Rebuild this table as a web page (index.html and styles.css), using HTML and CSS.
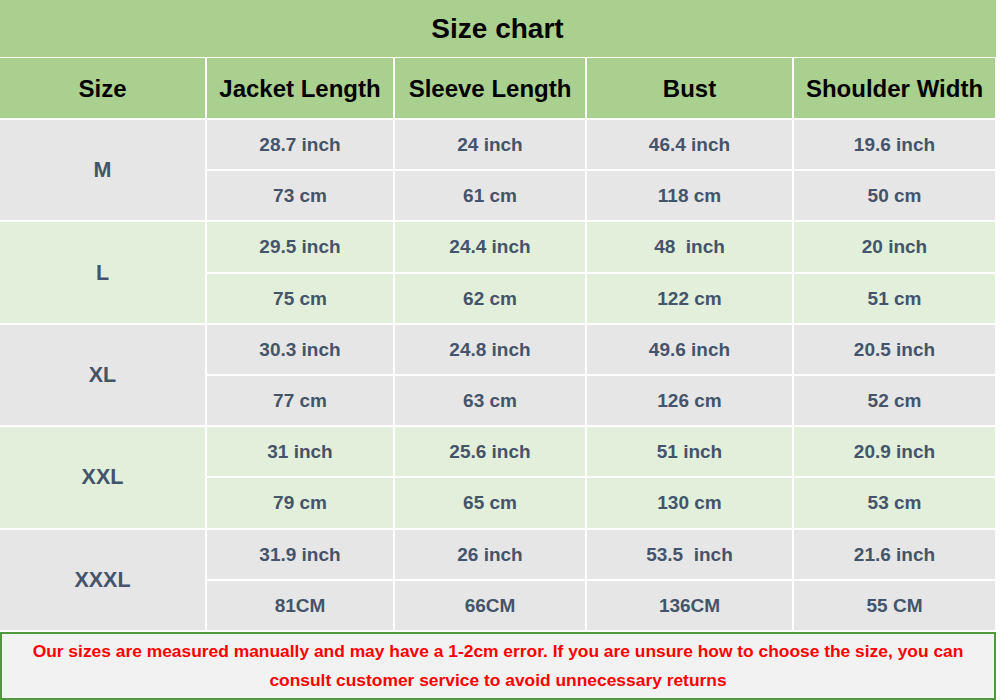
FILE: index.html
```html
<!DOCTYPE html>
<html>
<head>
<meta charset="utf-8">
<link rel="stylesheet" href="styles.css">
</head>
<body>
<div class="chart">
  <div class="title">Size chart</div>
  <table class="grid">
    <colgroup>
      <col class="c1"><col class="c2"><col class="c3"><col class="c4"><col class="c5">
    </colgroup>
    <thead>
      <tr class="head">
        <th>Size</th><th>Jacket Length</th><th>Sleeve Length</th><th>Bust</th><th>Shoulder Width</th>
      </tr>
    </thead>
    <tbody>
      <tr class="gray"><td rowspan="2" class="size">M</td><td>28.7 inch</td><td>24 inch</td><td>46.4 inch</td><td>19.6 inch</td></tr>
      <tr class="gray"><td>73 cm</td><td>61 cm</td><td>118 cm</td><td>50 cm</td></tr>
      <tr class="green"><td rowspan="2" class="size">L</td><td>29.5 inch</td><td>24.4 inch</td><td>48&nbsp; inch</td><td>20 inch</td></tr>
      <tr class="green"><td>75 cm</td><td>62 cm</td><td>122 cm</td><td>51 cm</td></tr>
      <tr class="gray"><td rowspan="2" class="size">XL</td><td>30.3 inch</td><td>24.8 inch</td><td>49.6 inch</td><td>20.5 inch</td></tr>
      <tr class="gray"><td>77 cm</td><td>63 cm</td><td>126 cm</td><td>52 cm</td></tr>
      <tr class="green"><td rowspan="2" class="size">XXL</td><td>31 inch</td><td>25.6 inch</td><td>51 inch</td><td>20.9 inch</td></tr>
      <tr class="green"><td>79 cm</td><td>65 cm</td><td>130 cm</td><td>53 cm</td></tr>
      <tr class="gray"><td rowspan="2" class="size">XXXL</td><td>31.9 inch</td><td>26 inch</td><td>53.5&nbsp; inch</td><td>21.6 inch</td></tr>
      <tr class="gray"><td>81CM</td><td>66CM</td><td>136CM</td><td>55 CM</td></tr>
    </tbody>
  </table>
  <div class="note">Our sizes are measured manually and may have a 1-2cm error. If you are unsure how to choose the size, you can consult customer service to avoid unnecessary returns</div>
</div>
</body>
</html>
```
FILE: styles.css
```css
html, body {
  margin: 0;
  padding: 0;
  background: #ffffff;
}
body {
  font-family: "Liberation Sans", Arial, sans-serif;
  font-weight: bold;
}
.chart {
  width: 996px;
}
.title {
  height: 57px;
  background: #a9d08e;
  color: #000;
  font-size: 28px;
  line-height: 58px;
  text-align: center;
  border-bottom: 1px solid #fff;
  padding-right: 1px;
}
.grid {
  width: 996px;
  border-collapse: collapse;
  table-layout: fixed;
}
.c1 { width: 206px; }
.c2 { width: 188px; }
.c3 { width: 192px; }
.c4 { width: 207px; }
.c5 { width: 203px; }
.grid th, .grid td {
  border: 2px solid #fff;
  text-align: center;
  padding: 0;
}
.grid tr:first-child th { border-top: 0; }
.grid th:first-child, .grid td.size { border-left: 0; }
.head th {
  height: 58px;
  padding-top: 2px;
  background: #a9d08e;
  color: #000;
  font-size: 24px;
}
.grid td {
  height: 48.2px;
  padding-top: 1px;
  font-size: 19px;
  color: #44546a;
}
.grid td.size {
  font-size: 21.5px;
}
.gray td { background: #e7e6e6; }
.green td { background: #e2efda; }
.note {
  box-sizing: border-box;
  height: 68px;
  border: 2px solid #4f9a3a;
  background: #f2f2f2;
  color: #ff0000;
  font-size: 17.4px;
  line-height: 29px;
  text-align: center;
  padding: 3px 10px 0;
}
```
